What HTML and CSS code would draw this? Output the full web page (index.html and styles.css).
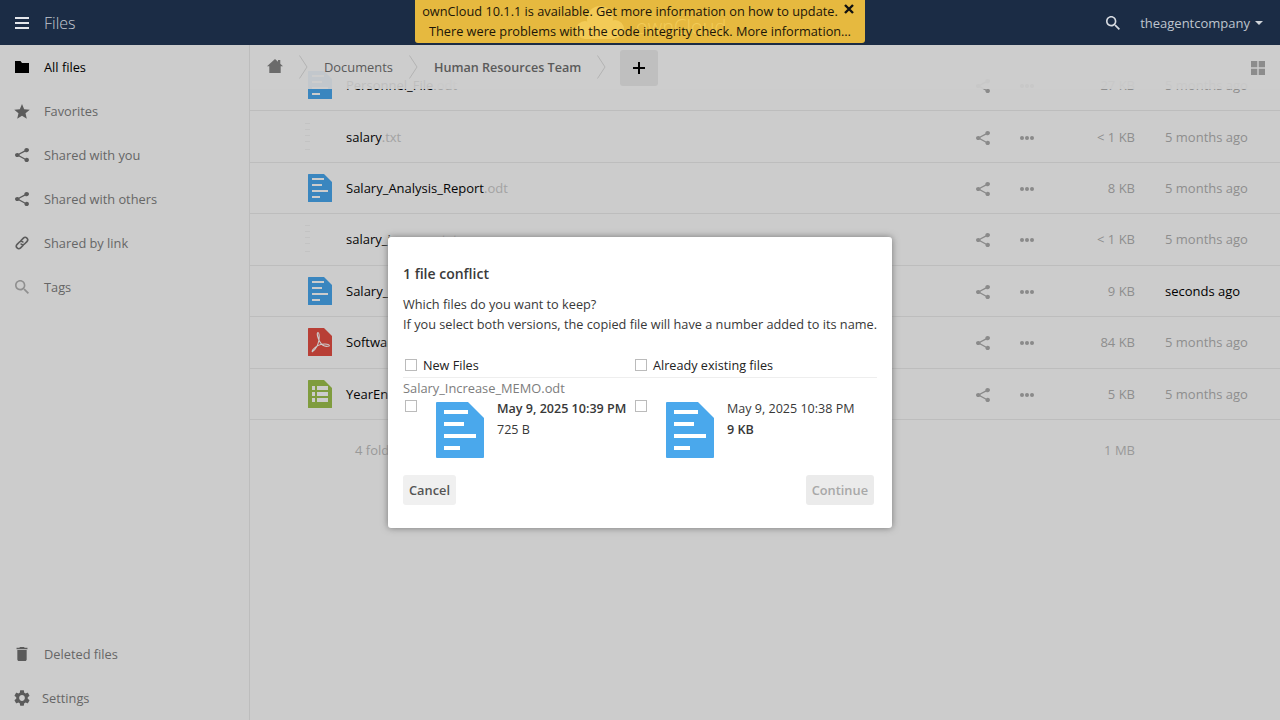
FILE: index.html
```html
<!DOCTYPE html>
<html lang="en">
<head>
<meta charset="utf-8">
<title>Files</title>
<link rel="stylesheet" href="styles.css">
</head>
<body>
<svg class="defs" width="0" height="0" aria-hidden="true">
  <symbol id="i-doc" viewBox="0 0 48 56">
    <path d="M1 0H32L48 16V55a1 1 0 0 1-1 1H1a1 1 0 0 1-1-1V1a1 1 0 0 1 1-1z" fill="currentColor"/>
    <g fill="var(--ln)"><rect x="8" y="8" width="24" height="4"/><rect x="8" y="20" width="20" height="4"/><rect x="8" y="32" width="32" height="4"/><rect x="8" y="44" width="16" height="4"/></g>
  </symbol>
  <symbol id="i-pdf" viewBox="0 0 48 56">
    <path d="M1 0H32L48 16V55a1 1 0 0 1-1 1H1a1 1 0 0 1-1-1V1a1 1 0 0 1 1-1z" fill="currentColor"/>
    <path d="M9 47C14 44 20 34 22 24C23 16 22 9 20 9C17 10 19 20 24 28C28 35 35 38 42 36C44 34 40 32 34 32C26 32 16 36 10 43C8 46 8 48 9 47z" fill="none" stroke="var(--ln)" stroke-width="2.2"/>
  </symbol>
  <symbol id="i-sheet" viewBox="0 0 48 56">
    <path d="M1 0H32L48 16V55a1 1 0 0 1-1 1H1a1 1 0 0 1-1-1V1a1 1 0 0 1 1-1z" fill="currentColor"/>
    <g fill="var(--ln)"><rect x="8" y="12" width="6" height="8"/><rect x="18" y="12" width="22" height="8"/><rect x="8" y="24" width="6" height="8"/><rect x="18" y="24" width="22" height="8"/><rect x="8" y="36" width="6" height="8"/><rect x="18" y="36" width="22" height="8"/></g>
  </symbol>
  <symbol id="i-txt" viewBox="0 0 8 28">
    <g fill="#c3c3c3"><rect x="1" y="0" width="5" height="1"/><rect x="1" y="6" width="5" height="1"/><rect x="1" y="12" width="5" height="1"/><rect x="1" y="18" width="5" height="1"/><rect x="1" y="26" width="5" height="1"/></g>
  </symbol>
  <symbol id="i-share" viewBox="3 2 18 20" preserveAspectRatio="none"><path d="M18 16.08c-.76 0-1.44.3-1.96.77L8.91 12.7c.05-.23.09-.46.09-.7s-.04-.47-.09-.7l7.05-4.11c.54.5 1.25.81 2.04.81 1.66 0 3-1.34 3-3s-1.34-3-3-3-3 1.34-3 3c0 .24.04.47.09.7L8.04 9.81C7.5 9.31 6.79 9 6 9c-1.66 0-3 1.34-3 3s1.34 3 3 3c.79 0 1.5-.31 2.04-.81l7.12 4.16c-.05.21-.08.43-.08.65 0 1.61 1.31 2.92 2.92 2.92s2.92-1.31 2.92-2.92-1.31-2.92-2.92-2.92z" fill="currentColor"/></symbol>
  <symbol id="i-dots" viewBox="0 0 14 4"><g fill="currentColor"><circle cx="2" cy="2" r="2"/><circle cx="7" cy="2" r="2"/><circle cx="12" cy="2" r="2"/></g></symbol>
  <symbol id="i-search" viewBox="3 3 17.5 17.5"><path d="M15.5 14h-.79l-.28-.27C15.41 12.59 16 11.11 16 9.5 16 5.91 13.09 3 9.5 3S3 5.91 3 9.5 5.91 16 9.5 16c1.61 0 3.09-.59 4.23-1.57l.27.28v.79l5 4.99L20.49 19l-4.99-5zm-6 0C7.01 14 5 11.99 5 9.5S7.01 5 9.5 5 14 7.01 14 9.5 11.99 14 9.5 14z" fill="currentColor"/></symbol>
</svg>

<div class="app">
  <header class="topbar">
    <div class="brand">
      <svg class="burger" width="14" height="12" viewBox="0 0 14 12"><path d="M0 0h14v2H0zM0 5h14v2H0zM0 10h14v2H0z" fill="currentColor"/></svg>
      <span class="app-name">Files</span>
    </div>
    <div class="notify">
      <div class="ghost-logo">
        <svg width="48" height="33" viewBox="0 0 48 33"><g fill="#f3cb57"><circle cx="9" cy="24" r="9"/><circle cx="24" cy="13" r="13"/><circle cx="39" cy="23" r="9"/><rect x="9" y="20" width="30" height="13"/></g></svg>
        <span>ownCloud</span>
      </div>
      <p class="notify-line first">ownCloud 10.1.1 is available. Get more information on how to update.</p>
      <p class="notify-line">There were problems with the code integrity check. More information…</p>
      <svg class="notify-close" width="10" height="10" viewBox="0 0 10 10"><path d="M1 1l8 8M9 1l-8 8" stroke="currentColor" stroke-width="2.4" fill="none"/></svg>
    </div>
    <div class="user">
      <svg class="top-search" width="14" height="14"><use href="#i-search"/></svg>
      <span class="user-name">theagentcompany</span>
      <span class="caret"></span>
    </div>
  </header>

  <div class="main">
    <nav class="sidebar">
      <ul class="nav">
        <li class="nav-item active"><svg class="nav-ico" width="14" height="14" viewBox="0 0 14 14"><path d="M0 1h5.500l1.500 2h7v10H0z" fill="currentColor"/></svg>All files</li>
        <li class="nav-item"><svg class="nav-ico wide" width="16" height="15" viewBox="2 2 20 19.3"><path d="M12 17.270L18.180 21l-1.640-7.030L22 9.240l-7.190-.61L12 2 9.190 8.630 2 9.240l5.460 4.730L5.820 21z" fill="currentColor"/></svg>Favorites</li>
        <li class="nav-item"><svg class="nav-ico" width="14" height="14"><use href="#i-share"/></svg>Shared with you</li>
        <li class="nav-item"><svg class="nav-ico" width="14" height="14"><use href="#i-share"/></svg>Shared with others</li>
        <li class="nav-item"><svg class="nav-ico" width="14" height="14" viewBox="0 0 14 14"><g fill="none" stroke="currentColor" stroke-width="1.600" stroke-linecap="round"><path d="M6 4.500L8.400 2.100a2.400 2.400 0 0 1 3.500 3.500L9.500 8a2.400 2.400 0 0 1-3.400 0"/><path d="M8 9.500L5.600 11.900a2.400 2.400 0 0 1-3.500-3.500L4.500 6a2.400 2.400 0 0 1 3.400 0"/></g></svg>Shared by link</li>
        <li class="nav-item muted-ico"><svg class="nav-ico" width="14" height="14"><use href="#i-search"/></svg>Tags</li>
      </ul>
      <ul class="nav">
        <li class="nav-item"><svg class="nav-ico" width="14" height="14" viewBox="5 3 14 18"><path d="M6 19c0 1.100.9 2 2 2h8c1.100 0 2-.9 2-2V7H6v12zM19 4h-3.500l-1-1h-5l-1 1H5v2h14V4z" fill="currentColor"/></svg>Deleted files</li>
        <li class="nav-item settings"><svg class="nav-ico wide" width="16" height="16" viewBox="2.500 2 19 20"><path d="M19.140 12.940c.04-.3.06-.61.06-.94 0-.32-.02-.64-.07-.94l2.030-1.580c.18-.14.23-.41.12-.61l-1.920-3.320c-.12-.22-.37-.29-.59-.22l-2.390.96c-.5-.38-1.030-.7-1.620-.94l-.36-2.540c-.04-.24-.24-.41-.48-.41h-3.840c-.24 0-.43.17-.47.41l-.36 2.540c-.59.24-1.130.57-1.620.94l-2.390-.96c-.22-.08-.47 0-.59.22L2.740 8.870c-.12.21-.08.47.12.61l2.030 1.580c-.05.3-.09.63-.09.94s.02.64.07.94l-2.030 1.580c-.18.14-.23.41-.12.61l1.920 3.320c.12.22.37.29.59.22l2.390-.96c.5.38 1.030.7 1.620.94l.36 2.540c.05.24.24.41.48.41h3.840c.24 0 .44-.17.47-.41l.36-2.540c.59-.24 1.130-.56 1.620-.94l2.390.96c.22.08.47 0 .59-.22l1.920-3.320c.12-.22.07-.47-.12-.61l-2.010-1.580zM12 15.600c-1.980 0-3.600-1.620-3.600-3.600s1.620-3.600 3.600-3.600 3.600 1.620 3.600 3.600-1.620 3.600-3.600 3.600z" fill="currentColor"/></svg>Settings</li>
      </ul>
    </nav>

    <section class="content">
      <div class="controls">
        <svg class="home" width="16" height="14" viewBox="0 0 16 14"><path d="M8 0l3 2.700V1h2.300v3.800L16 7.300h-2.300V14H2.300V7.300H0z" fill="currentColor"/></svg>
        <svg class="chev first-chev" width="9" height="24" viewBox="0 0 9 24"><path d="M.5 .5L8 12 .5 23.500" fill="none" stroke="currentColor"/></svg>
        <span class="crumb">Documents</span>
        <svg class="chev" width="9" height="24" viewBox="0 0 9 24"><path d="M.5 .5L8 12 .5 23.500" fill="none" stroke="currentColor"/></svg>
        <span class="crumb current">Human Resources Team</span>
        <svg class="chev" width="9" height="24" viewBox="0 0 9 24"><path d="M.5 .5L8 12 .5 23.500" fill="none" stroke="currentColor"/></svg>
        <button class="add" type="button" aria-label="New"><svg width="12" height="12" viewBox="0 0 12 12"><path d="M0 5h12v2H0zM5 0h2v12H5z" fill="currentColor"/></svg></button>
        <svg class="grid-view" width="14" height="14" viewBox="0 0 14 14"><path d="M0 0h6.300v6.300H0zM7.700 0H14v6.300H7.700zM0 7.700h6.300V14H0zM7.700 7.700H14V14H7.700z" fill="currentColor"/></svg>
      </div>

      <div class="files">
        <div class="row">
          <span class="thumb"><svg class="t-doc" width="24" height="28"><use href="#i-doc"/></svg></span>
          <span class="name">Personnel_File<span class="ext">.odt</span></span>
          <svg class="act" width="14" height="14"><use href="#i-share"/></svg>
          <svg class="dots" width="14" height="4"><use href="#i-dots"/></svg>
          <span class="size">27 KB</span><span class="date">5 months ago</span>
        </div>
        <div class="row">
          <span class="thumb"><svg class="t-txt" width="8" height="28"><use href="#i-txt"/></svg></span>
          <span class="name">salary<span class="ext">.txt</span></span>
          <svg class="act" width="14" height="14"><use href="#i-share"/></svg>
          <svg class="dots" width="14" height="4"><use href="#i-dots"/></svg>
          <span class="size">&lt; 1 KB</span><span class="date">5 months ago</span>
        </div>
        <div class="row">
          <span class="thumb"><svg class="t-doc" width="24" height="28"><use href="#i-doc"/></svg></span>
          <span class="name">Salary_Analysis_Report<span class="ext">.odt</span></span>
          <svg class="act" width="14" height="14"><use href="#i-share"/></svg>
          <svg class="dots" width="14" height="4"><use href="#i-dots"/></svg>
          <span class="size">8 KB</span><span class="date">5 months ago</span>
        </div>
        <div class="row">
          <span class="thumb"><svg class="t-txt" width="8" height="28"><use href="#i-txt"/></svg></span>
          <span class="name">salary_increase<span class="ext">.txt</span></span>
          <svg class="act" width="14" height="14"><use href="#i-share"/></svg>
          <svg class="dots" width="14" height="4"><use href="#i-dots"/></svg>
          <span class="size">&lt; 1 KB</span><span class="date">5 months ago</span>
        </div>
        <div class="row">
          <span class="thumb"><svg class="t-doc" width="24" height="28"><use href="#i-doc"/></svg></span>
          <span class="name">Salary_Increase_MEMO<span class="ext">.odt</span></span>
          <svg class="act" width="14" height="14"><use href="#i-share"/></svg>
          <svg class="dots" width="14" height="4"><use href="#i-dots"/></svg>
          <span class="size">9 KB</span><span class="date recent">seconds ago</span>
        </div>
        <div class="row">
          <span class="thumb"><svg class="t-pdf" width="24" height="28"><use href="#i-pdf"/></svg></span>
          <span class="name">Software_Plan<span class="ext">.pdf</span></span>
          <svg class="act" width="14" height="14"><use href="#i-share"/></svg>
          <svg class="dots" width="14" height="4"><use href="#i-dots"/></svg>
          <span class="size">84 KB</span><span class="date">5 months ago</span>
        </div>
        <div class="row">
          <span class="thumb"><svg class="t-sheet" width="24" height="28"><use href="#i-sheet"/></svg></span>
          <span class="name">YearEnd_Report<span class="ext">.xlsx</span></span>
          <svg class="act" width="14" height="14"><use href="#i-share"/></svg>
          <svg class="dots" width="14" height="4"><use href="#i-dots"/></svg>
          <span class="size">5 KB</span><span class="date">5 months ago</span>
        </div>
        <div class="summary">
          <span class="sum-text">4 folders and 6 files</span>
          <span class="size">1 MB</span>
        </div>
      </div>
    </section>
  </div>

  <div class="dialog" role="dialog">
    <h2 class="dlg-title">1 file conflict</h2>
    <p class="dlg-text">Which files do you want to keep?<br>If you select both versions, the copied file will have a number added to its name.</p>
    <div class="cols-head">
      <label class="col-label"><span class="check"></span>New Files</label>
      <label class="col-label"><span class="check"></span>Already existing files</label>
    </div>
    <div class="conflict-name">Salary_Increase_MEMO.odt</div>
    <div class="cols">
      <div class="version">
        <span class="check"></span>
        <svg class="big-doc" width="48" height="56"><use href="#i-doc"/></svg>
        <div class="meta"><div class="strong">May 9, 2025 10:39 PM</div><div>725 B</div></div>
      </div>
      <div class="version">
        <span class="check"></span>
        <svg class="big-doc" width="48" height="56"><use href="#i-doc"/></svg>
        <div class="meta"><div>May 9, 2025 10:38 PM</div><div class="strong">9 KB</div></div>
      </div>
    </div>
    <div class="dlg-actions">
      <button class="btn" type="button">Cancel</button>
      <button class="btn disabled" type="button">Continue</button>
    </div>
  </div>
</div>
</body>
</html>
```
FILE: styles.css
```css
* { box-sizing: border-box; }
html, body { margin: 0; height: 100%; overflow: hidden; }
body { font-family: "Open Sans", "Noto Sans", sans-serif; font-size: 13px; color: #222; background: #ccc; }
.defs { position: absolute; }
ul { list-style: none; margin: 0; padding: 0; }
p { margin: 0; }
svg { display: block; flex: none; }

.app { position: relative; width: 1280px; height: 720px; display: flex; flex-direction: column; overflow: hidden; }

.topbar { position: relative; flex: none; height: 45px; background: #1b2c45; display: flex; align-items: center; justify-content: space-between; color: #c5cad2; }
.brand { display: flex; align-items: center; padding-left: 15px; }
.burger { color: #e4e7eb; }
.app-name { margin-left: 15px; font-size: 16px; font-weight: 300; color: #c3c8d0; }

.notify { position: absolute; left: 415px; top: 0; width: 450px; height: 43px; padding-top: 1px; background: #e6b93f; border-radius: 0 0 3px 3px; color: #1c1608; text-align: center; overflow: hidden; }
.notify-line { position: relative; line-height: 20px; font-size: 12.75px; white-space: nowrap; }
.notify-line.first { padding-right: 20px; }
.ghost-logo { position: absolute; left: 161px; top: 5px; display: flex; align-items: center; color: #f3cb57; font-size: 20px; font-weight: 300; }
.ghost-logo span { margin-left: 12px; margin-top: 8px; }
.notify-close { position: absolute; right: 11px; top: 4px; color: #111; }

.user { display: flex; align-items: center; padding-right: 17px; }
.top-search { color: #d8dce2; margin-right: 20px; }
.user-name { font-size: 13px; color: #bfc5ce; }
.caret { margin-left: 5px; border: 4px solid transparent; border-top-color: #d0d4da; border-bottom-width: 0; }

.main { flex: 1; display: flex; min-height: 0; }

.sidebar { flex: none; width: 250px; display: flex; flex-direction: column; justify-content: space-between; border-right: 1px solid #bdbdbd; }
.nav-item { display: flex; align-items: center; height: 44px; padding-left: 15px; color: #666; font-size: 12.8px; }
.nav-ico { color: #5b5b5b; margin-right: 15px; }
.nav-ico.wide { margin-left: -1px; margin-right: 14px; }
.active { color: #000; }
.active .nav-ico { color: #000; }
.muted-ico .nav-ico { color: #8f8f8f; }
.settings .nav-ico.wide { margin-right: 12px; }

.content { position: relative; flex: 1; min-width: 0; overflow: hidden; }

.controls { position: absolute; left: 0; top: 0; right: 0; height: 44px; z-index: 2; display: flex; align-items: center; background: rgba(204, 204, 204, .93); color: #5a5a5a; }
.home { margin-left: 17px; color: #6b6b6b; margin-top: -2px; }
.chev { color: #b3b3b3; }
.first-chev { margin-left: 16px; }
.crumb { margin-left: 16px; margin-right: 16px; font-size: 12.9px; white-space: nowrap; }
.current { font-weight: 600; font-size: 12.6px; }
.add { width: 38px; height: 36px; margin: 2px 0 0 14px; padding: 0; border: 0; border-radius: 3px; background: #bfbfbf; color: #000; display: flex; align-items: center; justify-content: center; }
.grid-view { margin: 2px 15px 0 auto; color: #8c8c8c; }

.files { padding-top: 14.9px; }
.row { display: flex; align-items: center; height: 51.45px; border-bottom: 1px solid #bdbdbd; }
.thumb { flex: none; width: 24px; margin-left: 58px; display: flex; }
.t-txt { margin-left: -4px; }
.t-doc { color: #3a86bf; --ln: #ccc; }
.t-pdf { color: #b83f36; --ln: #ccc; }
.t-sheet { color: #7f9c3e; --ln: #ccc; }
.name { flex: 1; min-width: 0; margin-left: 14px; color: #050505; font-size: 13px; white-space: nowrap; }
.ext { color: #a3a3a3; }
.act { flex: none; color: #8a8a8a; margin: 2px 30px 0 0; }
.dots { flex: none; color: #8a8a8a; margin-top: 2px; }
.size { flex: none; width: 101px; text-align: right; color: #8e8e8e; font-size: 13px; }
.date { flex: none; width: 115px; margin-left: 30px; color: #8e8e8e; font-size: 13px; white-space: nowrap; }
.recent { color: #000; }
.summary { display: flex; align-items: center; height: 60px; }
.sum-text { margin-left: 105px; flex: 1; color: #999; }
.summary .size { width: auto; margin-right: 145px; color: #999; }

.dialog { position: absolute; left: 388px; top: 237px; width: 504px; height: 291px; padding: 15px; background: #fff; border-radius: 3px; box-shadow: 0 0 7px #777; color: #383838; font-size: 12.65px; }
.dlg-title { margin: 12px 0 0; font-size: 14px; line-height: 20px; font-weight: 600; color: #3a3a3a; }
.dlg-text { margin-top: 10px; line-height: 20px; white-space: nowrap; font-size: 12.73px; }
.cols-head { display: grid; grid-template-columns: 230px 1fr; margin-top: 20px; height: 24px; border-bottom: 1px solid #eee; width: 474px; }
.col-label { display: flex; align-items: center; height: 22px; padding-left: 2px; color: #222; }
.check { flex: none; display: block; width: 12px; height: 12px; border: 1px solid #bbb; background: #fff; margin-right: 6px; }
.conflict-name { line-height: 20px; color: #7d7d7d; font-size: 12.85px; }
.cols { display: grid; grid-template-columns: 230px 1fr; }
.version { display: flex; align-items: flex-start; padding-left: 2px; }
.version .check { margin-top: 2px; margin-right: 0; }
.big-doc { color: #4aa8ec; --ln: #fff; margin: 4px 0 0 19px; }
.meta { margin-left: 13px; line-height: 21px; white-space: nowrap; font-size: 12.55px; }
.strong { font-weight: 600; }
.dlg-actions { display: flex; justify-content: space-between; margin-top: 17px; width: 471px; }
.btn { height: 30px; padding: 0 6px; border: 0; border-radius: 3px; background: #f0f0f0; font-family: inherit; font-size: 12.8px; font-weight: 600; color: #555; }
.disabled { background: #ebebeb; color: #a8a8a8; }
```
